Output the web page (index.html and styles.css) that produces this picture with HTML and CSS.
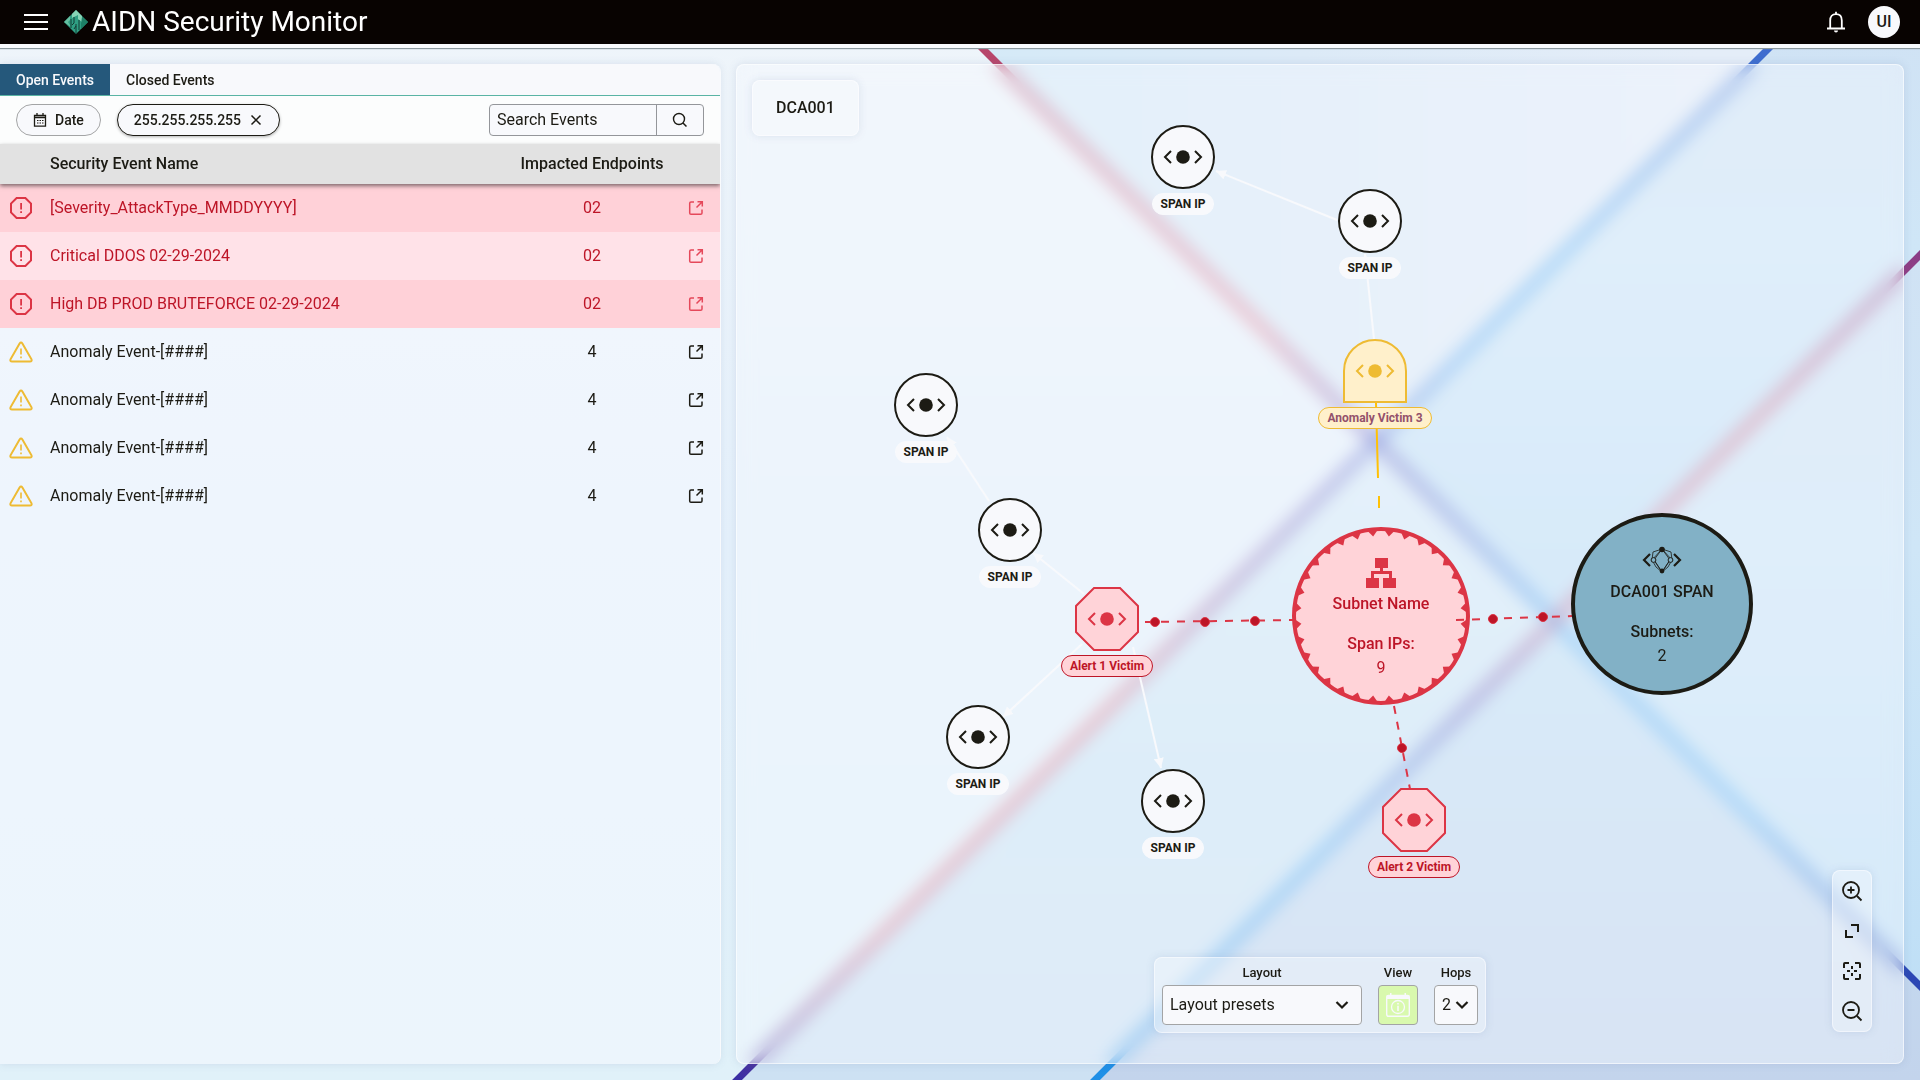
FILE: index.html
```html
<!DOCTYPE html>
<html lang="en">
<head>
  <meta charset="UTF-8">
  <title>AIDN Security Monitor</title>
  <link rel="stylesheet" href="styles.css">
</head>
<body>
<!-- backdrop -->
<svg class="backdrop" viewBox="0 0 1920 1080" preserveAspectRatio="none" aria-hidden="true">
  <defs>
    <linearGradient id="west" x1="0" y1="0" x2="0" y2="1"><stop offset="0" stop-color="#eff5fa"/><stop offset=".5" stop-color="#e4f0fb"/><stop offset="1" stop-color="#e0f1f9"/></linearGradient>
    <linearGradient id="north" gradientUnits="userSpaceOnUse" x1="980" y1="0" x2="1700" y2="0"><stop offset="0" stop-color="#d5eaf7"/><stop offset=".45" stop-color="#dceaf7"/><stop offset="1" stop-color="#e4edf8"/></linearGradient>
    <linearGradient id="east" x1="0" y1="0" x2="0" y2="1"><stop offset="0" stop-color="#d0e2f4"/><stop offset=".4" stop-color="#cfe6f7"/><stop offset="1" stop-color="#bfdff6"/></linearGradient>
    <linearGradient id="middle" x1="0" y1="0" x2="0" y2="1"><stop offset="0" stop-color="#d9ebf8"/><stop offset=".5" stop-color="#cce5f5"/><stop offset="1" stop-color="#cde1f3"/></linearGradient>
    <linearGradient id="south" x1="0" y1="0" x2="0" y2="1"><stop offset="0" stop-color="#c3e1f5"/><stop offset="1" stop-color="#c3d4ec"/></linearGradient>
    <linearGradient id="lineA" gradientUnits="userSpaceOnUse" x1="983" y1="49" x2="1912" y2="978"><stop offset="0" stop-color="#b7466b"/><stop offset=".3" stop-color="#dd5c74"/><stop offset=".42" stop-color="#5247b4"/><stop offset=".52" stop-color="#4a66cc"/><stop offset=".62" stop-color="#2f9af0"/><stop offset=".82" stop-color="#3aa3f3"/><stop offset="1" stop-color="#2c47b4"/></linearGradient>
    <linearGradient id="lineB" gradientUnits="userSpaceOnUse" x1="1768" y1="49" x2="739" y2="1078"><stop offset="0" stop-color="#3f6bce"/><stop offset=".2" stop-color="#2f9af0"/><stop offset=".3" stop-color="#3a98ee"/><stop offset=".4" stop-color="#4f55c2"/><stop offset=".52" stop-color="#8050a0"/><stop offset=".64" stop-color="#d9556b"/><stop offset=".86" stop-color="#d8556e"/><stop offset="1" stop-color="#3a2fa4"/></linearGradient>
    <linearGradient id="lineC" gradientUnits="userSpaceOnUse" x1="1920" y1="255" x2="1095" y2="1080"><stop offset="0" stop-color="#8a3c86"/><stop offset=".2" stop-color="#cf5673"/><stop offset=".4" stop-color="#c9557a"/><stop offset=".55" stop-color="#5b4cb5"/><stop offset=".72" stop-color="#2f9af0"/><stop offset="1" stop-color="#1f8fe6"/></linearGradient>
  </defs>
  <rect width="1920" height="1080" fill="url(#west)"/>
  <path d="M934 0H1817L1376 441Z" fill="url(#north)"/>
  <path d="M1817 0H1920V255L1555 620L1376 441Z" fill="url(#east)"/>
  <path d="M1376 441L1555 620L1095 1080H737Z" fill="url(#middle)"/>
  <path d="M1920 255V986L1555 620Z" fill="url(#east)"/>
  <path d="M1555 620L1920 986V1080H1095Z" fill="url(#south)"/>
  <g fill="none" stroke-width="7">
    <path d="M934 0L1925 991" stroke="url(#lineA)"/>
    <path d="M1817 0L732 1085" stroke="url(#lineB)"/>
    <path d="M1925 250L1090 1085" stroke="url(#lineC)"/>
  </g>
</svg>

<!-- shared icons -->
<svg class="sprite" aria-hidden="true">
  <symbol id="octagon-alert" viewBox="0 0 24 24">
    <path d="M7.600 2H16.400L22 7.600V16.400L16.400 22H7.600L2 16.400V7.600Z" fill="none" stroke="currentColor" stroke-width="2"/>
    <path d="M11.200 7h1.800v6.500h-1.800zM11.200 15.200h1.800V17h-1.800z" fill="currentColor"/>
  </symbol>
  <symbol id="triangle-alert" viewBox="0 0 24 24">
    <path d="M10.600 3.500L1.500 19.300Q.8 21.500 3 21.500H21Q23.200 21.500 22.500 19.300L13.400 3.500Q12 1.400 10.600 3.500Z" fill="none" stroke="currentColor" stroke-width="2"/>
    <path d="M11.200 8.500h1.600v6h-1.600zM11.200 16.400h1.600v1.800h-1.600z" fill="currentColor"/>
  </symbol>
  <symbol id="open-link" viewBox="0 0 16 16">
    <path d="M6 2H3Q1.700 2 1.700 3.300V13Q1.700 14.300 3 14.300H12.700Q14 14.300 14 13V9.500M9.500 1.700H14.300V6.500M14 2L8.500 7.500" fill="none" stroke="currentColor" stroke-width="1.500"/>
  </symbol>
  <symbol id="endpoint" viewBox="0 0 40 16">
    <path d="M8 2L2 8L8 14M32 2L38 8L32 14" fill="none" stroke="currentColor" stroke-width="2"/>
    <circle cx="20" cy="8" r="6.800" fill="currentColor"/>
  </symbol>
</svg>

<header class="topbar">
  <button class="icon-btn" type="button" aria-label="Menu">
    <svg width="24" height="18" viewBox="0 0 24 18"><path d="M0 2H24M0 9H24M0 16H24" stroke="#fff" stroke-width="2"/></svg>
  </button>
  <a class="brand" href="#">
    <svg width="24" height="24" viewBox="0 0 24 24" aria-hidden="true">
      <path d="M12 0L24 12L12 24L0 12Z" fill="#2f9f83"/>
      <path d="M12 0L18 6V12L14 9V5L8 8V4Z" fill="#86d3b5"/>
      <path d="M0 12L6 6V10L4 12L7 17Z" fill="#66bfa0"/>
      <path d="M18 7L24 12L17 19V14Z" fill="#1d8066"/>
      <path d="M7 9V18M10 7V13L8 15M12 14V24M15 10V20M10 19L12 16" stroke="#123b32" fill="none"/>
    </svg>
    <span>AIDN Security Monitor</span>
  </a>
  <div class="user">
    <button class="icon-btn" type="button" aria-label="Notifications">
      <svg width="18" height="22" viewBox="0 0 18 22"><path d="M3.200 17V9.500Q3.200 3.200 9 3.200Q14.800 3.200 14.800 9.500V17M0 17.500H18M9 .8V3" fill="none" stroke="#fff" stroke-width="1.800"/><path d="M7 19.500h4Q11 21.500 9 21.500Q7 21.500 7 19.500Z" fill="#fff"/></svg>
    </button>
    <button class="avatar" type="button">UI</button>
  </div>
</header>

<main class="main">
  <section class="events">
    <nav class="tabs">
      <button class="tab current" type="button">Open Events</button>
      <button class="tab" type="button">Closed Events</button>
    </nav>
    <div class="filters">
      <button class="chip" type="button">
        <svg width="14" height="14" viewBox="0 0 14 14" aria-hidden="true"><path d="M1.500 2.500H12.500V13.200H1.500ZM1.500 4.500H12.500M4 0V3M10 0V3" fill="none" stroke="currentColor" stroke-width="1.300"/><path d="M4 7.500H10.500M4 10H10.500" stroke="currentColor" stroke-width="1.200" stroke-dasharray="1.500 1"/></svg>
        Date
      </button>
      <button class="chip active" type="button">
        255.255.255.255
        <svg width="14" height="14" viewBox="0 0 14 14" aria-hidden="true"><path d="M2.500 2.500L11.500 11.500M11.500 2.500L2.500 11.500" stroke="currentColor" stroke-width="1.500"/></svg>
      </button>
      <form class="search">
        <input type="text" placeholder="Search Events" aria-label="Search Events">
        <button type="button" aria-label="Search">
          <svg width="16" height="16" viewBox="0 0 16 16"><circle cx="7" cy="7" r="5.500" fill="none" stroke="currentColor" stroke-width="1.400"/><path d="M11 11L14.500 14.500" stroke="currentColor" stroke-width="1.500"/></svg>
        </button>
      </form>
    </div>
    <table class="event-table">
      <thead>
        <tr><th class="col-icon"></th><th class="col-name">Security Event Name</th><th class="col-count">Impacted Endpoints</th><th class="col-link"></th></tr>
      </thead>
      <tbody>
        <tr class="alert">
          <td><svg class="severity"><use href="#octagon-alert"/></svg></td><td>[Severity_AttackType_MMDDYYYY]</td><td class="col-count">02</td>
          <td><a href="#" aria-label="Open event"><svg class="link-icon"><use href="#open-link"/></svg></a></td>
        </tr>
        <tr class="alert light">
          <td><svg class="severity"><use href="#octagon-alert"/></svg></td><td>Critical DDOS 02-29-2024</td><td class="col-count">02</td>
          <td><a href="#" aria-label="Open event"><svg class="link-icon"><use href="#open-link"/></svg></a></td>
        </tr>
        <tr class="alert">
          <td><svg class="severity"><use href="#octagon-alert"/></svg></td><td>High DB PROD BRUTEFORCE 02-29-2024</td><td class="col-count">02</td>
          <td><a href="#" aria-label="Open event"><svg class="link-icon"><use href="#open-link"/></svg></a></td>
        </tr>
        <tr class="anomaly">
          <td><svg class="severity"><use href="#triangle-alert"/></svg></td><td>Anomaly Event-[####]</td><td class="col-count">4</td>
          <td><a href="#" aria-label="Open event"><svg class="link-icon"><use href="#open-link"/></svg></a></td>
        </tr>
        <tr class="anomaly">
          <td><svg class="severity"><use href="#triangle-alert"/></svg></td><td>Anomaly Event-[####]</td><td class="col-count">4</td>
          <td><a href="#" aria-label="Open event"><svg class="link-icon"><use href="#open-link"/></svg></a></td>
        </tr>
        <tr class="anomaly">
          <td><svg class="severity"><use href="#triangle-alert"/></svg></td><td>Anomaly Event-[####]</td><td class="col-count">4</td>
          <td><a href="#" aria-label="Open event"><svg class="link-icon"><use href="#open-link"/></svg></a></td>
        </tr>
        <tr class="anomaly">
          <td><svg class="severity"><use href="#triangle-alert"/></svg></td><td>Anomaly Event-[####]</td><td class="col-count">4</td>
          <td><a href="#" aria-label="Open event"><svg class="link-icon"><use href="#open-link"/></svg></a></td>
        </tr>
      </tbody>
    </table>
  </section>

  <section class="map">
    <h2 class="map-title">DCA001</h2>

    <div class="graph">
      <div class="hub subnet">
        <svg class="hub-shape" viewBox="-89 -89 178 178" aria-hidden="true">
          <defs>
            <!-- one tooth, doubled until it goes all the way round -->
            <g id="tooth1" transform="rotate(5.625)"><path d="M-5.500 -86.500L0 -80L5.500 -86.500Z"/></g>
            <g id="tooth2"><use href="#tooth1"/><use href="#tooth1" transform="rotate(11.250)"/></g>
            <g id="tooth4"><use href="#tooth2"/><use href="#tooth2" transform="rotate(22.500)"/></g>
            <g id="tooth8"><use href="#tooth4"/><use href="#tooth4" transform="rotate(45)"/></g>
            <g id="tooth16"><use href="#tooth8"/><use href="#tooth8" transform="rotate(90)"/></g>
          </defs>
          <circle r="87" fill="#ffd3d8" stroke="#dc3545" stroke-width="4"/>
          <g fill="#dc3545"><use href="#tooth16"/><use href="#tooth16" transform="rotate(180)"/></g>
        </svg>
        <svg width="30" height="30" viewBox="0 0 30 30" aria-hidden="true"><path d="M9 0H22V10H17V13H26V20H30V30H17V20H23V16H8V20H13V30H0V20H5V13H14V10H9Z" fill="#dc3545"/></svg>
        <strong>Subnet Name</strong>
        <strong class="hub-label">Span IPs:</strong>
        <span>9</span>
      </div>

      <svg class="edges" aria-hidden="true">
        <defs>
          <marker id="arrow" viewBox="0 0 10 10" refX="10" refY="5" markerWidth="10" markerHeight="10" markerUnits="userSpaceOnUse" orient="auto"><path d="M0 0L10 5L0 10Z" fill="#f8f9fc"/></marker>
        </defs>
        <g stroke="#f8f9fc" stroke-width="2">
          <line x1="600" y1="155" x2="479" y2="106" marker-end="url(#arrow)"/>
          <line x1="637" y1="274" x2="628" y2="189" marker-end="url(#arrow)"/>
          <line x1="252" y1="436" x2="210" y2="372" marker-end="url(#arrow)"/>
          <line x1="347" y1="529" x2="296" y2="488" marker-end="url(#arrow)"/>
          <line x1="345" y1="579" x2="266" y2="652" marker-end="url(#arrow)"/>
          <line x1="396" y1="582" x2="424" y2="703" marker-end="url(#arrow)"/>
        </g>
        <g stroke="#ffc107" stroke-width="2">
          <line x1="639" y1="338" x2="641" y2="413"/>
          <line x1="642" y1="431" x2="642" y2="443"/>
        </g>
        <g stroke="#dc3545" stroke-width="2" stroke-dasharray="8 8">
          <line x1="408" y1="557" x2="556" y2="555"/>
          <line x1="719" y1="555" x2="835" y2="551"/>
          <line x1="657" y1="641" x2="673" y2="724"/>
        </g>
        <g fill="#bd1527" stroke="#dc3545">
          <circle cx="418" cy="557" r="4.500"/><circle cx="468" cy="557" r="4.500"/><circle cx="518" cy="556" r="4.500"/>
          <circle cx="756" cy="554" r="4.500"/><circle cx="806" cy="552" r="4.500"/>
          <circle cx="665" cy="683" r="4.500"/>
        </g>
      </svg>

      <div class="hub span">
        <svg width="40" height="28" viewBox="0 0 40 28" aria-hidden="true">
          <path d="M8 8L2 14L8 20M32 8L38 14L32 20" fill="none" stroke="currentColor" stroke-width="2.200"/>
          <path d="M20 3L11 6L10 14L14 21L20 26L26 21L30 14L29 6ZM20 3L12 14L20 26L28 14ZM20 3L10 14M20 3L30 14M12 14L20 26L28 14" fill="none" stroke="currentColor" stroke-width=".8"/>
          <circle cx="20" cy="3.500" r="2.800" fill="currentColor"/><circle cx="20" cy="25" r="2.400" fill="currentColor"/>
          <circle cx="11.500" cy="14" r="2.400" fill="#82b1c6" stroke="currentColor"/><circle cx="28.500" cy="14" r="2.400" fill="#82b1c6" stroke="currentColor"/>
        </svg>
        <strong>DCA001 SPAN</strong>
        <strong class="hub-label">Subnets:</strong>
        <span>2</span>
      </div>

      <div class="node n1"><span class="shape"><svg><use href="#endpoint"/></svg></span><span class="label">SPAN IP</span></div>
      <div class="node n2"><span class="shape"><svg><use href="#endpoint"/></svg></span><span class="label">SPAN IP</span></div>
      <div class="node n3"><span class="shape"><svg><use href="#endpoint"/></svg></span><span class="label">SPAN IP</span></div>
      <div class="node n4"><span class="shape"><svg><use href="#endpoint"/></svg></span><span class="label">SPAN IP</span></div>
      <div class="node n5"><span class="shape"><svg><use href="#endpoint"/></svg></span><span class="label">SPAN IP</span></div>
      <div class="node n6"><span class="shape"><svg><use href="#endpoint"/></svg></span><span class="label">SPAN IP</span></div>
      <div class="node victim-anomaly"><span class="shape"><svg><use href="#endpoint"/></svg></span><span class="label">Anomaly Victim 3</span></div>
      <div class="node victim-alert a1">
        <svg class="octagon" viewBox="0 0 64 64"><path d="M19 1H45L63 19V45L45 63H19L1 45V19Z" fill="#ffd3d8" stroke="#dc3545" stroke-width="2"/><use href="#endpoint" x="12" y="24" width="40" height="16"/></svg>
        <span class="label">Alert 1 Victim</span>
      </div>
      <div class="node victim-alert a2">
        <svg class="octagon" viewBox="0 0 64 64"><path d="M19 1H45L63 19V45L45 63H19L1 45V19Z" fill="#ffd3d8" stroke="#dc3545" stroke-width="2"/><use href="#endpoint" x="12" y="24" width="40" height="16"/></svg>
        <span class="label">Alert 2 Victim</span>
      </div>
    </div>

    <div class="toolbar">
      <div class="field">
        <label for="layout">Layout</label>
        <select id="layout" class="layout-select"><option>Layout presets</option></select>
      </div>
      <div class="field">
        <label for="view">View</label>
        <button id="view" class="view-btn" type="button">
          <svg width="24" height="24" viewBox="0 0 24 24" aria-hidden="true"><path d="M.7 4Q.7 2.500 2.500 2.500H21.500Q23.300 2.500 23.300 4V21Q23.300 23.300 21.500 23.300H2.500Q.7 23.300 .7 21Z" fill="none" stroke="#f8f9fc" stroke-width="1.400"/><path d="M.7 2.500H23.300V6H.7ZM4 0h1.500v3H4zM18.500 0H20v3h-1.500z" fill="#f8f9fc"/><circle cx="12" cy="14" r="6.500" fill="none" stroke="#f8f9fc" stroke-width="1.300"/><path d="M11.200 10h1.600v1.600h-1.600zM11.200 12.800h1.600V18h-1.600z" fill="#f8f9fc"/></svg>
        </button>
      </div>
      <div class="field">
        <label for="hops">Hops</label>
        <select id="hops" class="hops-select"><option>2</option></select>
      </div>
    </div>

    <div class="zoom">
      <button type="button" aria-label="Zoom in"><svg width="24" height="24" viewBox="0 0 24 24"><circle cx="11" cy="11" r="8" fill="none" stroke="currentColor" stroke-width="1.800"/><path d="M17 17L21.500 21.500M7.500 11H14.500M11 7.500V14.500" stroke="currentColor" stroke-width="1.800"/></svg></button>
      <button type="button" aria-label="Expand"><svg width="24" height="24" viewBox="0 0 24 24"><path d="M11 6H18V13M6 11V18H13" fill="none" stroke="currentColor" stroke-width="2"/></svg></button>
      <button type="button" aria-label="Fit to view"><svg width="24" height="24" viewBox="0 0 24 24"><path d="M4 9V5Q4 4 5 4H9M15 4H19Q20 4 20 5V9M20 15V19Q20 20 19 20H15M9 20H5Q4 20 4 19V15M12 7V10M12 14V17M7 12H10M14 12H17" fill="none" stroke="currentColor" stroke-width="2"/></svg></button>
      <button type="button" aria-label="Zoom out"><svg width="24" height="24" viewBox="0 0 24 24"><circle cx="11" cy="11" r="8" fill="none" stroke="currentColor" stroke-width="1.800"/><path d="M17 17L21.500 21.500M7.500 11H14.500" stroke="currentColor" stroke-width="1.800"/></svg></button>
    </div>
  </section>
</main>
</body>
</html>
```
FILE: styles.css
```css
* {
  padding: 0;
  margin: 0;
  box-sizing: border-box;
}

body {
  min-height: 100vh;
  display: flex;
  flex-direction: column;
  font: 16px/24px Roboto, sans-serif;
  color: #1c1b14;
}

button,
input,
select {
  font: inherit;
  color: inherit;
  background: none;
  border: 0;
}

button {
  cursor: pointer;
}

a {
  color: inherit;
  text-decoration: none;
}

svg {
  display: block;
}

.backdrop {
  position: fixed;
  left: 0;
  top: 0;
  width: 100%;
  height: 100%;
  z-index: -1;
}

.sprite {
  position: absolute;
  width: 0;
  height: 0;
}

/* top bar */
.topbar {
  display: flex;
  align-items: center;
  gap: 16px;
  height: 48px;
  padding: 0 20px 0 24px;
  background: #080301;
  background-clip: padding-box;
  border-bottom: 4px solid #f8fafd;
  box-shadow: 0 1px 1px #8b989e;
}

.icon-btn {
  display: flex;
}

.brand {
  display: flex;
  align-items: center;
  gap: 4px;
  font-size: 28px;
  line-height: 40px;
  color: #fff;
}

.user {
  display: flex;
  align-items: center;
  gap: 23px;
  margin-left: auto;
}

.avatar {
  width: 32px;
  height: 32px;
  border-radius: 50%;
  background: #f8f9fc;
  font-weight: 500;
}

/* layout */
.main {
  flex: 1;
  display: flex;
  gap: 16px;
  padding: 16px 16px 16px 0;
}

.events {
  flex: 0 0 37.5vw;
  min-width: 0;
  border-radius: 0 8px 8px 0;
  overflow: hidden;
  background: rgba(248, 250, 255, 0.5);
  box-shadow: 1px 0 0 #f8fafd, 0 0 8px rgba(80, 100, 150, 0.15);
}

/* events list */
.tabs {
  display: flex;
  height: 32px;
  background: #f8f9fc;
  border-bottom: 1px solid #5ab4a4;
}

.tab {
  padding: 0 16px;
  font-size: 14px;
  font-weight: 500;
}

.tab.current {
  color: #f8f9fc;
  background: #25587b;
}

.filters {
  display: flex;
  align-items: center;
  gap: 16px;
  height: 48px;
  padding: 0 16px;
  background: #fcfdfd;
}

.chip {
  display: flex;
  align-items: center;
  gap: 8px;
  height: 32px;
  padding: 0 16px;
  border: 1px solid #a3a4a5;
  border-radius: 16px;
  background: #f8f9fc;
  font-size: 14px;
  font-weight: 500;
}

.chip.active {
  border-color: #1c1b14;
  box-shadow: 0 1px 3px rgba(0, 0, 0, 0.3);
}

.search {
  display: flex;
  width: 215px;
  height: 32px;
  margin-left: auto;
  border: 1px solid #94969a;
  border-radius: 4px;
  background: #f8f9fc;
}

.search input {
  flex: 1;
  min-width: 0;
  padding: 0 7px;
}

.search input::placeholder {
  color: #1c1b14;
  opacity: 1;
}

.search button {
  width: 47px;
  display: flex;
  align-items: center;
  justify-content: center;
  border-left: 1px solid #94969a;
}

.event-table {
  width: 100%;
  table-layout: fixed;
  border-collapse: collapse;
}

.event-table thead {
  position: relative;
  background: #e2e2e2;
  box-shadow: 0 2px 4px rgba(0, 0, 0, 0.5);
}

.event-table th {
  height: 40px;
  font-weight: 500;
  text-align: left;
}

.event-table td {
  height: 48px;
}

.event-table .col-icon {
  width: 50px;
}

.event-table .col-count {
  width: 160px;
  text-align: center;
}

.event-table .col-link {
  width: 48px;
}

.alert {
  color: #bd1527;
  background: #ffd1d8;
}

.alert.light {
  background: #ffe2e8;
}

.severity {
  width: 24px;
  height: 24px;
  margin-left: 9px;
  color: #dc3545;
}

.anomaly .severity {
  color: #eebb33;
}

.link-icon {
  width: 16px;
  height: 16px;
  margin: 0 auto;
}

.alert .link-icon {
  color: #e5485a;
}

/* network map */
.map {
  flex: 1;
  position: relative;
  border: 1px solid rgba(255, 255, 255, 0.6);
  border-radius: 8px;
  background: rgba(248, 251, 255, 0.4);
  backdrop-filter: blur(9px);
  box-shadow: 0 0 8px rgba(80, 100, 150, 0.15);
}

.map-title,
.toolbar,
.zoom {
  position: absolute;
  z-index: 1;
  border: 1px solid rgba(255, 255, 255, 0.5);
  border-radius: 8px;
  background: rgba(248, 250, 253, 0.35);
  box-shadow: 0 0 8px rgba(80, 100, 150, 0.15);
}

.map-title {
  left: 15px;
  top: 15px;
  padding: 15px 23px;
  font-size: 16px;
  font-weight: 500;
}

.graph,
.edges {
  position: absolute;
  left: 0;
  top: 0;
  width: 100%;
  height: 100%;
}

.node {
  position: absolute;
  display: flex;
  flex-direction: column;
  align-items: center;
  gap: 4px;
  width: 140px;
}

.n1 { left: 376px; top: 60px; }
.n2 { left: 563px; top: 124px; }
.n3 { left: 119px; top: 308px; }
.n4 { left: 203px; top: 433px; }
.n5 { left: 171px; top: 640px; }
.n6 { left: 366px; top: 704px; }
.victim-anomaly { left: 568px; top: 274px; }
.a1 { left: 300px; top: 522px; }
.a2 { left: 607px; top: 723px; }

.shape {
  display: flex;
  align-items: center;
  justify-content: center;
  width: 64px;
  height: 64px;
  border: 2px solid #1c1b14;
  border-radius: 50%;
  background: #f8f9fc;
}

.shape svg {
  width: 40px;
  height: 16px;
}

.octagon {
  width: 64px;
  height: 64px;
}

.label {
  padding: 0 8px;
  border: 1px solid #f8f9fc;
  border-radius: 11px;
  background: #f8f9fc;
  font-size: 12px;
  line-height: 20px;
  font-weight: 700;
}

.victim-anomaly .shape {
  border-color: #eebb33;
  border-radius: 32px 32px 0 0;
  background: #fff0cb;
  color: #eebb33;
}

.victim-anomaly .label {
  border-color: #eebb33;
  background: #fff0cb;
  color: #93516b;
}

.victim-alert {
  color: #dc3545;
}

.victim-alert .label {
  border-color: #bd1527;
  background: #ffd3d8;
  color: #bd1527;
}

.hub {
  position: absolute;
  display: flex;
  flex-direction: column;
  align-items: center;
  border-radius: 50%;
}

.hub strong {
  font-weight: 500;
}

.hub .hub-label {
  margin-top: 16px;
}

.subnet {
  left: 555px;
  top: 462px;
  width: 178px;
  height: 178px;
  padding-top: 31px;
  color: #bd1527;
}

.subnet svg {
  position: relative;
}

.subnet strong:first-of-type {
  margin-top: 4px;
}

.subnet .hub-shape {
  position: absolute;
  left: 0;
  top: 0;
  width: 178px;
  height: 178px;
}

.subnet strong,
.subnet span {
  position: relative;
}

.span {
  left: 834px;
  top: 448px;
  width: 182px;
  height: 182px;
  padding-top: 29px;
  border: 4px solid #1c1b14;
  background: #82b1c6;
}

.span strong:first-of-type {
  margin-top: 6px;
}

.toolbar {
  left: 50%;
  bottom: 30px;
  display: flex;
  gap: 16px;
  padding: 7px;
  transform: translateX(-50%);
}

.field {
  display: flex;
  flex-direction: column;
  align-items: center;
  gap: 4px;
}

.field label {
  font-size: 13px;
  line-height: 16px;
  font-weight: 500;
}

.field select,
.view-btn {
  height: 40px;
  border: 1px solid #a3a4a5;
  border-radius: 4px;
}

.field select {
  appearance: none;
  padding: 0 7px;
  background: #f8f9fc url("data:image/svg+xml,%3Csvg xmlns='http://www.w3.org/2000/svg' width='14' height='10' viewBox='0 0 14 10'%3E%3Cpath d='M1.500 2L7 7.500L12.500 2' fill='none' stroke='%231c1b14' stroke-width='2.200'/%3E%3C/svg%3E") no-repeat right 12px center;
}

.field .layout-select {
  width: 200px;
}

.field .hops-select {
  width: 44px;
  background-position: right 8px center;
}

.view-btn {
  display: flex;
  align-items: center;
  justify-content: center;
  width: 40px;
  background: #d9f9ae;
}

.zoom {
  right: 31px;
  bottom: 31px;
  display: flex;
  flex-direction: column;
  width: 40px;
}

.zoom button {
  display: flex;
  align-items: center;
  justify-content: center;
  height: 40px;
}
```
